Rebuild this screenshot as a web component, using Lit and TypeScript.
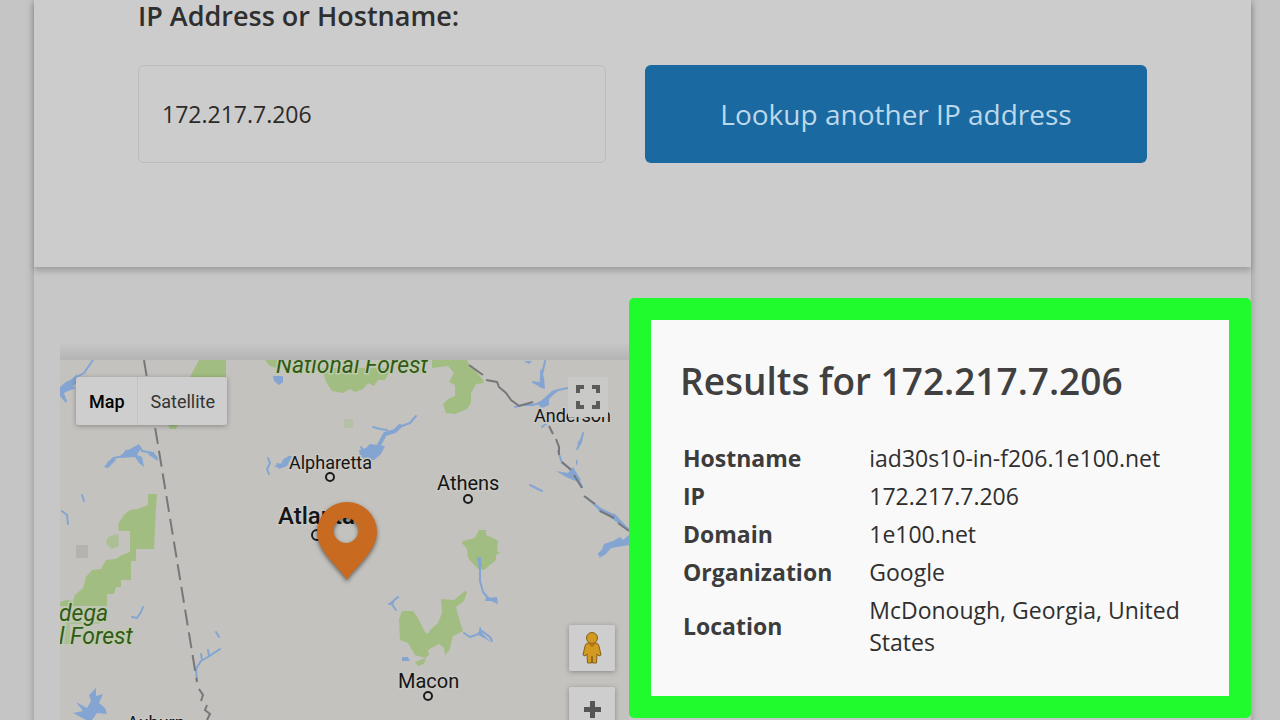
import { LitElement, html, css, svg } from "lit";
import { customElement, property, state } from "lit/decorators.js";
import { classMap } from "lit/directives/class-map.js";

@customElement("region-map")
class RegionMap extends LitElement {
  @state() private mode = "Map";

  static styles = css`
    :host {
      display: block;
      position: relative;
      font-family: Roboto, sans-serif;
    }
    .canvas {
      display: block;
      width: 100%;
      height: 440px;
      background: #c3c2be;
    }
    .water { fill: #84a5d2; }
    .stream { fill: none; stroke: #84a5d2; stroke-width: 2; stroke-linecap: round; stroke-linejoin: round; }
    .wide { stroke-width: 4; }
    .park { fill: #a1bd81; }
    .faint { fill: #b3b3b0; }
    .border { fill: none; stroke: #77777a; stroke-width: 2; }
    .town { fill: #c9c9c7; stroke: #1c1c1c; stroke-width: 2; }
    .label { fill: #151515; stroke: #c9c8c4; stroke-width: 3; paint-order: stroke; }
    .small { font-size: 18px; }
    .medium { font-size: 20px; }
    .large { font-size: 24px; font-weight: 500; }
    .forest { font-size: 23px; font-style: italic; fill: #33591a; stroke: #bccbaa; }
    .pin { fill: #c86a20; filter: drop-shadow(0 2px 2px rgba(0, 0, 0, 0.5)); }
    button {
      border: 0;
      margin: 0;
      padding: 0;
      font: inherit;
      background: #cecece;
      color: #333;
      cursor: pointer;
    }
    .modes {
      position: absolute;
      top: 17px;
      left: 16px;
      display: flex;
      border-radius: 3px;
      overflow: hidden;
      box-shadow: 0 1px 5px rgba(0, 0, 0, 0.3);
    }
    .mode {
      height: 48px;
      padding: 0 12px 0 13px;
      font-size: 18px;
    }
    .mode + .mode { border-left: 1px solid #c2c2c2; }
    .active { font-weight: 500; color: #000; }
    .fullscreen {
      position: absolute;
      top: 17px;
      right: 21px;
      width: 40px;
      height: 40px;
      background: #c9c9c8;
    }
    .side {
      position: absolute;
      top: 265px;
      right: 14px;
      display: grid;
      gap: 16px;
    }
    .tool {
      width: 46px;
      height: 46px;
      border-radius: 2px;
      box-shadow: 0 1px 5px rgba(0, 0, 0, 0.3);
    }
    .icon { display: block; margin: auto; }
  `;

  private terrain() {
    return svg`
      <path class="park" d="M190 377 L199 360 H226 V378 Z M168 424 L178 424 176 429 170 429 Z"/>
      <path class="park" d="M265 360 H277 L277 368 270 366 Z M322 368 H392 L385 380 378 380 374 386 368 383 363 389 355 392 350 389 343 393 332 391 326 382 Z M432 360 H467 L470 367 475 370 483 380 484 383 476 384 471 393 471 403 467 409 455 414 446 413 443 404 448 399 455 396 455 385 449 382 454 373 448 366 432 368 Z"/>
      <path class="park" d="M148 494 H157 L156 508 154 549 H136 V561 H131 V580 H121 V587 H116 L114 594 H107 V606 H60 V602 L67 600 73 601 75 595 83 588 86 577 92 570 101 569 106 560 116 559 122 555 130 552 V531 H119 L118 524 124 515 130 510 138 509 148 505 Z"/>
      <path class="park" d="M66 622 H100 V624 H70 V644 H64 Z M108 537 L118 534 119 546 111 549 106 543 Z" opacity=".7"/>
      <path class="park" d="M479 530 H486 L486 535 495 539 498 541 497 551 500 553 496 555 496 560 484 570 478 569 468 558 467 549 462 543 463 541 475 538 Z"/>
      <path class="park" d="M402 611 L413 611 418 618 425 632 428 634 431 629 438 623 442 613 441 599 454 600 465 591 467 592 464 601 456 607 460 622 463 631 453 636 449 651 445 655 444 648 439 644 428 650 429 655 425 658 415 655 408 643 400 640 399 619 Z M415 662 L426 658 424 664 418 666 Z"/>
      <path class="faint" d="M76 545 H88 V558 H76 Z"/>
      <path class="park" d="M344 419 H353 V428 H344 Z" opacity=".4"/>

      <path class="stream" d="M93 360 L84 373 75 378 M60 392 L74 388 M62 392 L66 401"/>
      <path class="water" d="M60 387 L66 382 72 379 77 374 78 381 70 390 64 393 66 403 60 396 Z"/>
      <path class="stream" d="M108 463 L114 458 123 456 126 451 137 450 M140 447 L142 451 153 453 157 459"/>
      <path class="water" d="M104 467 L113 457 116 460 108 468 Z M121 455 L130 449 139 444 141 448 137 455 142 457 144 467 139 463 135 457 121 458 Z M147 451 L157 456 158 461 149 455 Z"/>
      <path class="stream" d="M62 511 L67 515 68 524 M82 495 L84 501"/>
      <path class="water" d="M273 376 L283 376 283 382 279 385 274 381 Z"/>
      <path class="stream" d="M268 458 L270 463 267 469 269 474 M276 466 L281 467 284 460 290 457"/>
      <path class="water" d="M276 463 L283 464 288 456 292 456 287 466 279 469 Z M359 450 L366 448 370 444 385 446 381 454 374 460 366 461 360 456 Z"/>
      <path class="stream wide" d="M379 445 L385 434 395 431 400 426"/>
      <path class="stream" d="M373 427 L380 429 387 430 M399 427 L410 423 416 416 M363 450 L361 447"/>
      <path class="stream" d="M541 372 L542 384 533 382 541 386 M545 361 L542 375"/>
      <path class="water" d="M541 367 L544 378 545 389 539 387 Z M524 361 L532 361 529 364 Z M542 400 L552 391 557 389 549 399 549 405 542 408 537 403 Z"/>
      <path class="stream" d="M548 398 L558 390 568 388 M515 407 L523 405 532 405 541 403 M540 408 L547 423 542 427"/>
      <path class="stream" d="M583 433 L581 442 577 449 M530 485 L542 491"/>
      <path class="water" d="M583 434 L579 445 577 444 Z M576 459 L578 462 576 466 Z M556 471 L568 473 573 467 581 480 578 482 566 477 Z"/>
      <path class="stream" d="M558 451 L562 463 571 469 577 477 582 487 M586 497 L597 507 611 514 625 527 629 529"/>
      <path class="water" d="M595 503 L603 510 599 512 Z M603 511 L615 514 628 528 625 528 611 518 Z"/>
      <path class="stream wide" d="M600 554 L607 548 614 545 624 543 629 540"/>
      <path class="water" d="M599 558 L604 544 613 541 620 537 623 540 629 535 V545 L611 548 606 554 Z"/>
      <path class="stream" d="M480 558 L480 568 480 581 483 592 489 599 M396 610 L391 603 398 597 M389 604 L393 603"/>
      <path class="water" d="M477 556 L481 559 482 566 479 569 Z M486 598 L497 597 498 604 491 601 485 601 Z M402 657 L408 657 410 661 402 661 Z"/>
      <path class="stream" d="M464 633 L470 637 476 635 482 631 490 637 492 641"/>
      <path class="water" d="M480 626 L483 634 492 643 486 639 478 635 Z"/>
      <path class="stream" d="M132 617 L137 618 141 612 143 607"/>
      <path class="stream" d="M197 681 L196 669 201 661 208 657 220 649 M202 660 L201 654 M209 656 L208 650 M216 632 L219 637"/>
      <path class="water" d="M76 702 L87 708 91 701 89 695 96 688 96 696 103 694 99 703 105 708 107 714 97 713 92 720 86 720 73 713 83 711 Z"/>

      <path class="border" stroke-dasharray="16 7" d="M144 360 L197 682"/>
      <path class="border" d="M199 689 L203 695 201 701 M207 705 L205 710 210 714 207 720"/>
      <path class="border" d="M469 365 L483 375 M486 380 L497 382 499 387 506 393 511 400 519 406 533 402 M549 426 L553 434 M556 439 L559 447 559 455 M562 462 L571 470 M574 475 L582 488 M584 496 L595 504 M600 511 L614 518 M618 523 L629 531"/>`;
  }

  render() {
    return html`
      <svg class="canvas" viewBox="60 360 569 440" preserveAspectRatio="xMinYMin slice" role="img" aria-label="Map of Georgia">
        ${this.terrain()}
        <text class="label forest" x="276" y="373">National Forest</text>
        <text class="label forest" x="59" y="621">dega</text>
        <text class="label forest" x="59" y="644">l Forest</text>
        <text class="label small" x="289" y="469">Alpharetta</text>
        <circle class="town" cx="330" cy="477" r="4"></circle>
        <text class="label medium" x="437" y="490">Athens</text>
        <circle class="town" cx="468" cy="499" r="4"></circle>
        <text class="label small" x="534" y="422">Anderson</text>
        <text class="label large" x="278" y="524">Atlanta</text>
        <circle class="town" cx="317" cy="535" r="5"></circle>
        <text class="label medium" x="398" y="688">Macon</text>
        <circle class="town" cx="428" cy="696" r="4"></circle>
        <text class="label small" x="127" y="729">Auburn</text>
        <path class="pin" fill-rule="evenodd" d="M347 580 C342 570 317 552 317 532 A30 30 0 0 1 377 532 C377 552 352 570 347 580 Z M346 518 A12.500 12.500 0 1 0 346 543 A12.500 12.500 0 1 0 346 518 Z"></path>
      </svg>
      <div class="modes">
        ${["Map", "Satellite"].map(
          (name) => html`<button
            class=${classMap({ mode: true, active: this.mode === name })}
            @click=${() => (this.mode = name)}
          >${name}</button>`
        )}
      </div>
      <button class="fullscreen" aria-label="Toggle fullscreen">
        <svg class="icon" width="26" height="26" viewBox="0 0 26 26" fill="none" stroke="#5b5b5b" stroke-width="4">
          <path d="M3 9 V3 H9 M17 3 H23 V9 M23 17 V23 H17 M9 23 H3 V17"></path>
        </svg>
      </button>
      <div class="side">
        <button class="tool" aria-label="Street View">
          <svg class="icon" width="20" height="34" viewBox="0 0 20 34" fill="#d39a22" stroke="#85601a" stroke-width="1">
            <path d="M6 12 H14 Q16 12 17 15 L19 24 17 25 15 23 14.500 32 H10.500 L10 25 9.500 32 H5.500 L5 23 3 25 1 24 3 15 Q4 12 6 12 Z"></path>
            <circle cx="10" cy="7" r="5.500"></circle>
            <path d="M6.500 12.500 L10 16.500 13.500 12.500 Z" fill="#b87318" stroke="none"></path>
          </svg>
        </button>
        <button class="tool" aria-label="Zoom in">
          <svg class="icon" width="18" height="18" viewBox="0 0 18 18" fill="#555">
            <path d="M7 0 H12 V6 H18 V11 H12 V17 H7 V11 H1 V6 H7 Z"></path>
          </svg>
        </button>
      </div>
    `;
  }
}

@customElement("app-root")
class AppRoot extends LitElement {
  @property() address = "172.217.7.206";

  private rows = [
    ["Hostname", "iad30s10-in-f206.1e100.net"],
    ["IP", "172.217.7.206"],
    ["Domain", "1e100.net"],
    ["Organization", "Google"],
    ["Location", "McDonough, Georgia, United States"],
  ];

  static styles = css`
    :host {
      display: block;
      box-sizing: border-box;
      height: 100vh;
      overflow: hidden;
      padding: 0 29px 0 34px;
      background: #c5c5c5;
      color: #2f2f2f;
      font-family: "Open Sans", sans-serif;
    }
    .page {
      min-height: 100vh;
      background: #c7c7c7;
      box-shadow: 0 0 8px rgba(0, 0, 0, 0.25);
    }
    .lookup {
      display: grid;
      grid-template-columns: 468fr 502fr;
      column-gap: 39px;
      row-gap: 33px;
      padding: 0 104px 104px;
      background: #cccccc;
      box-shadow: 0 4px 6px rgba(0, 0, 0, 0.2);
    }
    .caption {
      grid-column: 1 / -1;
      font-size: 27px;
      line-height: 32px;
      font-weight: 600;
    }
    .field, .submit {
      box-sizing: border-box;
      width: 100%;
      height: 98px;
      margin: 0;
      border-radius: 6px;
      font-family: inherit;
    }
    .field {
      padding: 0 23px;
      border: 1px solid #bcbcbc;
      background: transparent;
      color: #2a2a2a;
      font-size: 23px;
    }
    .submit {
      border: 0;
      background: #1a69a1;
      color: #bcd8ea;
      font-size: 28px;
      cursor: pointer;
    }
    .details {
      display: grid;
      grid-template-columns: 569fr 622fr;
      align-items: start;
      padding: 31px 0 0 26px;
    }
    .map {
      padding-top: 46px;
    }
    .map::before {
      content: "";
      display: block;
      height: 16px;
      background: linear-gradient(#c5c5c5, #b4b4b4);
    }
    .results {
      position: relative;
      padding: 32px 29px 35px;
      border: 22px solid #20fb2e;
      border-radius: 5px;
      background: #f9f9f9;
    }
    .title {
      margin: 0 0 29px;
      font-size: 37px;
      line-height: 58px;
      font-weight: 600;
      color: #404040;
    }
    .facts {
      border-collapse: collapse;
      font-size: 23px;
      line-height: 32px;
      text-align: left;
    }
    .facts th, .facts td {
      padding: 3px;
      font-weight: 400;
    }
    .facts th {
      padding-right: 34px;
      font-weight: 700;
      color: #3c3c3c;
    }
  `;

  render() {
    return html`
      <main class="page">
        <form class="lookup" @submit=${(e: Event) => e.preventDefault()}>
          <label class="caption" for="address">IP Address or Hostname:</label>
          <input class="field" id="address" .value=${this.address} />
          <button class="submit">Lookup another IP address</button>
        </form>
        <section class="details">
          <div class="map"><region-map></region-map></div>
          <div class="results">
            <h2 class="title">Results for ${this.address}</h2>
            <table class="facts">
              <tbody>
                ${this.rows.map(([name, value]) => html`<tr><th scope="row">${name}</th><td>${value}</td></tr>`)}
              </tbody>
            </table>
          </div>
        </section>
      </main>
    `;
  }
}
